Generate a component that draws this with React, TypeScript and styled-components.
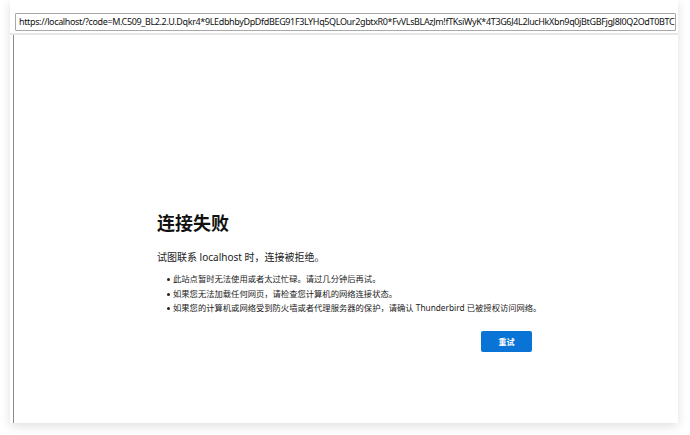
import React from "react";
import styled, { createGlobalStyle } from "styled-components";

const Global = createGlobalStyle`
  html, body {
    margin: 0;
    padding: 0;
    background: #ffffff;
  }
  body {
    font-family: "Noto Sans", "Noto Sans CJK SC", sans-serif;
    overflow: hidden;
  }
`;

const Stage = styled.div`
  width: 690px;
  height: 435px;
  display: flex;
  padding-left: 10px;
  box-sizing: border-box;
`;

const Window = styled.div`
  width: 668px;
  height: 423px;
  background: #ffffff;
  box-shadow: 0 3px 10px rgba(0, 0, 0, 0.13);
  display: flex;
  flex-direction: column;
`;

const AddressBar = styled.div`
  padding: 13px 2px 2px 5px;
  border-bottom: 2px solid #e6e6e6;
  display: flex;
`;

const UrlField = styled.div`
  flex: 1;
  height: 18px;
  border: 1px solid #a8a8a8;
  border-radius: 1px;
  box-sizing: border-box;
  padding: 0 0 0 3px;
  overflow: hidden;
  white-space: nowrap;
  font-family: "Noto Sans", sans-serif;
  font-size: 9px;
  letter-spacing: -0.36px;
  line-height: 16px;
  color: #111;
`;

const Frame = styled.div`
  flex: 1;
  margin-left: 3px;
  border-left: 1px solid #8a8a8a;
  display: flex;
  flex-direction: column;
  padding: 176px 0 0 143px;
`;

const Title = styled.h1`
  margin: 0;
  font-family: "Noto Sans CJK SC", sans-serif;
  font-size: 18px;
  line-height: 22px;
  font-weight: 700;
  color: #111;
`;

const Lead = styled.p`
  margin: 17px 0 0;
  font-family: "Noto Sans", "Noto Sans CJK SC", sans-serif;
  font-size: 10px;
  line-height: 14px;
  color: #222;
`;

const Bullets = styled.ul`
  margin: 8px 0 0;
  padding: 0 0 0 16px;
  list-style: none;
  display: flex;
  flex-direction: column;
`;

const Bullet = styled.li`
  position: relative;
  font-family: "Noto Sans", "Noto Sans CJK SC", sans-serif;
  font-size: 8.3px;
  line-height: 14.5px;
  color: #222;

  &::before {
    content: "";
    position: absolute;
    left: -6px;
    top: 6px;
    width: 3px;
    height: 3px;
    border-radius: 50%;
    background: #222;
  }
`;

const Actions = styled.div`
  width: 375px;
  display: flex;
  justify-content: flex-end;
  margin-top: 15px;
`;

const RetryButton = styled.button`
  width: 51px;
  height: 21px;
  border: none;
  border-radius: 2px;
  background: #0a74d6;
  color: #fff;
  font-family: "Noto Sans CJK SC", sans-serif;
  font-weight: 700;
  font-size: 8px;
  padding: 0;
  cursor: pointer;
`;

const url =
  "https://localhost/?code=M.C509_BL2.2.U.Dqkr4*9LEdbhbyDpDfdBEG91F3LYHq5QLOur2gbtxR0*FvVLsBLAzJm!fTKsiWyK*4T3G6J4L2lucHkXbn9q0jBtGBFjgJ8l0Q2OdT0BTC";

const tips = [
  "此站点暂时无法使用或者太过忙碌。请过几分钟后再试。",
  "如果您无法加载任何网页，请检查您计算机的网络连接状态。",
  "如果您的计算机或网络受到防火墙或者代理服务器的保护，请确认 Thunderbird 已被授权访问网络。",
];

export default function App() {
  return (
    <>
      <Global />
      <Stage>
        <Window>
          <AddressBar>
            <UrlField>{url}</UrlField>
          </AddressBar>
          <Frame>
            <Title>连接失败</Title>
            <Lead>试图联系 localhost 时，连接被拒绝。</Lead>
            <Bullets>
              {tips.map((t) => (
                <Bullet key={t}>{t}</Bullet>
              ))}
            </Bullets>
            <Actions>
              <RetryButton>重试</RetryButton>
            </Actions>
          </Frame>
        </Window>
      </Stage>
    </>
  );
}
